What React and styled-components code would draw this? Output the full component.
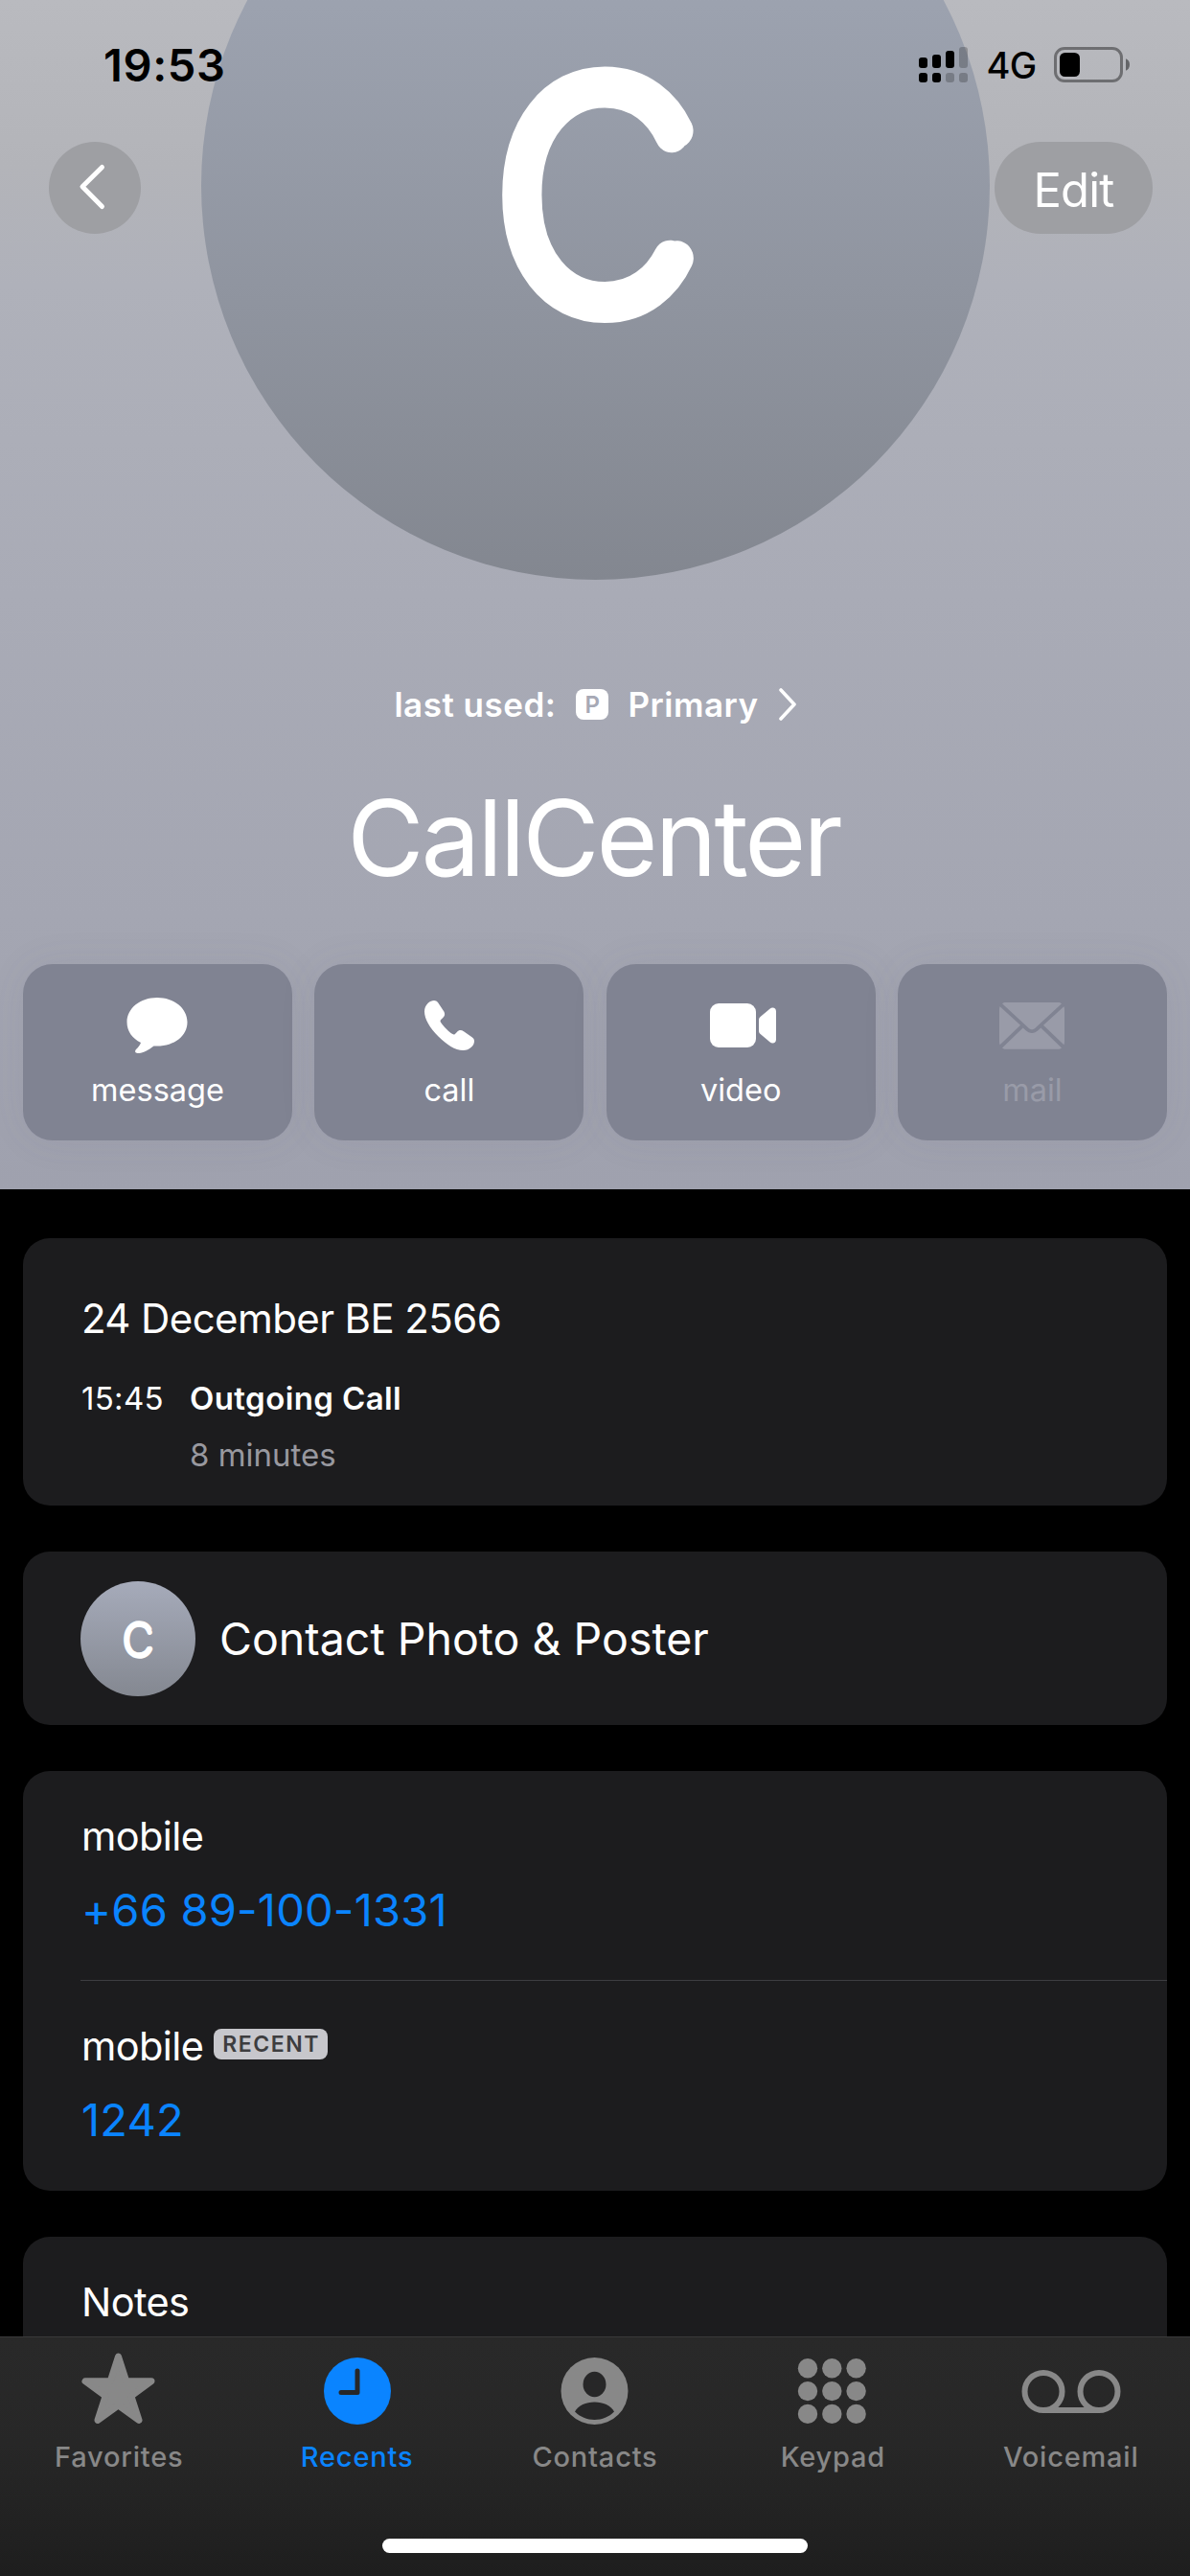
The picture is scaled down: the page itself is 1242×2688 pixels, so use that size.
// React
import { useState } from 'react'

// Styled components
import styled, { createGlobalStyle } from 'styled-components'

const actions = [
  { label: 'message', icon: <MessageIcon />, shift: -1 },
  { label: 'call', icon: <CallIcon />, shift: 0 },
  { label: 'video', icon: <VideoIcon />, shift: 3 },
  { label: 'mail', icon: <MailIcon />, shift: 0, disabled: true }
]

const tabs = [
  { label: 'Favorites', icon: <StarIcon /> },
  { label: 'Recents', icon: <ClockIcon /> },
  { label: 'Contacts', icon: <PersonIcon /> },
  { label: 'Keypad', icon: <KeypadIcon /> },
  { label: 'Voicemail', icon: <VoicemailIcon /> }
]

function App () {

  const [activeTab, setActiveTab] = useState('Recents')

  return (
    <Screen>
      <GlobalStyle />
      <Hero>
        <Avatar>
          <Initial size={823} viewBox="0 0 823 823" />
        </Avatar>
        <LastUsed>
          <span>last used:</span>
          <LineBadge>P</LineBadge>
          <span>Primary</span>
          <ChevronRight />
        </LastUsed>
        <ContactName>CallCenter</ContactName>
        <Actions>
          {
            actions.map((action) => {
              return (
                <ActionButton key={action.label} disabled={action.disabled}>
                  <ActionIcon $shift={action.shift}>{action.icon}</ActionIcon>
                  <ActionLabel>{action.label}</ActionLabel>
                </ActionButton>
              )
            })
          }
        </Actions>
        <Header>
          <StatusBar>
            <Clock>19:53</Clock>
            <StatusIcons>
              <SignalIcon />
              <Network>4G</Network>
              <BatteryIcon />
            </StatusIcons>
          </StatusBar>
          <NavBar>
            <BackButton aria-label="Back">
              <ChevronLeft />
            </BackButton>
            <EditButton>Edit</EditButton>
          </NavBar>
        </Header>
      </Hero>
      <Cards>
        <CallCard>
          <CallDate>24 December BE 2566</CallDate>
          <CallRow>
            <CallTime>15:45</CallTime>
            <CallType>Outgoing Call</CallType>
            <CallDuration>8 minutes</CallDuration>
          </CallRow>
        </CallCard>
        <PosterCard>
          <SmallAvatar>
            <Initial size={120} viewBox="13.7 11.7 800 800" />
          </SmallAvatar>
          <PosterTitle>Contact Photo &amp; Poster</PosterTitle>
        </PosterCard>
        <PhoneCard>
          <PhoneRow $divider>
            <PhoneLabel>mobile</PhoneLabel>
            <PhoneNumber>+66 89-100-1331</PhoneNumber>
          </PhoneRow>
          <PhoneRow>
            <PhoneLabel>
              mobile
              <RecentBadge>RECENT</RecentBadge>
            </PhoneLabel>
            <PhoneNumber>1242</PhoneNumber>
          </PhoneRow>
        </PhoneCard>
        <NotesCard>Notes</NotesCard>
      </Cards>
      <TabBar>
        <TabList>
          {
            tabs.map((tab) => {
              return (
                <Tab
                  key={tab.label}
                  $active={tab.label === activeTab}
                  onClick={() => setActiveTab(tab.label)}
                >
                  {tab.icon}
                  <TabLabel>{tab.label}</TabLabel>
                </Tab>
              )
            })
          }
        </TabList>
        <HomeIndicator />
      </TabBar>
    </Screen>
  )

}

export default App

// Icons

// Thin letter with a wide round stroke, dashed so that its ends stop early and come out rounded
function Initial ({ size, viewBox }) {
  return (
    <svg width={size} height={size} viewBox={viewBox}>
      <InitialText transform="translate(417.5 534) scale(0.96 1)" textAnchor="middle">C</InitialText>
    </svg>
  )
}

function SignalIcon () {
  return (
    <svg width="51" height="37" viewBox="0 0 51 37">
      <rect x="0" y="11" width="9" height="11" rx="3" />
      <rect x="14" y="8" width="9" height="14" rx="3" />
      <rect x="28" y="4" width="9" height="18" rx="3" />
      <rect x="42" y="0" width="9" height="22" rx="3" opacity="0.22" />
      <rect x="0" y="27" width="9" height="10" rx="3" />
      <rect x="14" y="27" width="9" height="10" rx="3" />
      <rect x="28" y="27" width="9" height="10" rx="3" opacity="0.22" />
      <rect x="42" y="27" width="9" height="10" rx="3" opacity="0.22" />
    </svg>
  )
}

function BatteryIcon () {
  return (
    <svg width="79" height="37" viewBox="0 0 79 37">
      <rect x="1.5" y="1.5" width="69" height="34" rx="9.5" fill="none" stroke="#000" strokeOpacity="0.4" strokeWidth="3" />
      <rect x="6" y="6" width="21" height="25" rx="5.5" />
      <path d="M75 12.3c2.5.9 4 3.2 4 6.2s-1.5 5.3-4 6.2z" fillOpacity="0.45" />
    </svg>
  )
}

function ChevronLeft () {
  return (
    <svg width="96" height="96" viewBox="0 0 96 96" fill="none" stroke="#fff" strokeWidth="5" strokeLinecap="round" strokeLinejoin="round">
      <path d="M55.5 26.5L35 46.8L55.5 67.5" />
    </svg>
  )
}

function ChevronRight () {
  return (
    <svg width="18" height="34" viewBox="0 0 18 34" fill="none" stroke="#fff" strokeWidth="3.6" strokeLinecap="round" strokeLinejoin="round">
      <path d="M2 2L16 17L2 32" />
    </svg>
  )
}

function MessageIcon () {
  return (
    <svg width="64" height="58" viewBox="0 0 64 58" fill="currentColor">
      <path d="M32 0C49.5 0 63.5 11 63.5 25.5S50 50.5 32 50.5c-1.2 0-2.4 0-3.5-.1C24 54 17 58 11.5 58c-2.3 0-3.2-2-1.5-3.9 2.2-2.3 4-4.5 5-7.1C6 42.5.5 35 .5 25.5.5 11 14.5 0 32 0z" />
    </svg>
  )
}

function CallIcon () {
  return (
    <svg width="52" height="52" viewBox="0 0 52 52" fill="currentColor">
      <path d="M14.5 37.5C6 29 0 19.5 0 11.5 0 8.2 1.2 5.2 3.7 2.8 5.7.9 7.9 0 10 0c1.7 0 3.1.7 4.2 2.3l5.8 8.6c.8 1.2 1.1 2.2 1.1 3.3 0 1.3-.6 2.5-1.8 3.7l-2.1 2.1c-.9.9-.8 1.6-.3 2.5 1.2 2 3.7 4.9 6 7.2s4.8 4.4 6.5 5.4c.9.6 1.7.6 2.5-.2l2-2c1.2-1.2 2.4-1.8 3.7-1.8 1.1 0 2.2.4 3.4 1.2l8.6 6C51.3 39.4 52 40.8 52 42.4c0 2.1-1.1 4.3-2.9 6.1C46.7 50.9 43.7 52 40.4 52 32 52 23 46 14.5 37.5z" />
    </svg>
  )
}

function VideoIcon () {
  return (
    <svg width="70" height="46" viewBox="0 0 70 46" fill="currentColor">
      <rect x="0" y="0" width="48" height="46" rx="9" />
      <path d="M51 17.5c0-1.4.5-2.5 1.6-3.5l9.8-8.3c1-.8 1.9-1.2 3-1.2 2.2 0 3.6 1.6 3.6 4v29c0 2.4-1.4 4-3.6 4-1.1 0-2-.4-3-1.2L52.6 32c-1.1-1-1.6-2.1-1.6-3.5z" />
    </svg>
  )
}

function MailIcon () {
  return (
    <svg width="68" height="49" viewBox="0 0 68 49" fill="currentColor">
      <path d="M3 1.3C4 .4 5.3 0 7 0h54c1.7 0 3 .4 4 1.3L38 26.2c-1.5 1.4-2.8 2-4 2s-2.5-.6-4-2z" />
      <path d="M.6 4.2L22 23.8.6 44.2C.2 43.3 0 42.3 0 41V7.5C0 6.2.2 5.1.6 4.2z" />
      <path d="M67.4 4.2L46 23.8l21.4 20.4c.4-.9.6-1.9.6-3.2V7.5c0-1.3-.2-2.4-.6-3.3z" />
      <path d="M3 47.5L24.7 26.5l2.6 2.4c2.3 2 4.4 3 6.7 3s4.4-1 6.7-3l2.6-2.4L65 47.5c-1 .9-2.3 1.3-4 1.3H7c-1.7 0-3-.4-4-1.3z" />
    </svg>
  )
}

function StarIcon () {
  return (
    <svg width="104" height="76" viewBox="0 0 104 76" fill="currentColor" stroke="currentColor" strokeWidth="7" strokeLinejoin="round">
      <path d="M51.5 5.2L59.8 30.8L86 30.8L64.9 46.3L73 71.4L51.5 55.8L30 71.4L38.1 46.3L17 30.8L43.2 30.8Z" />
    </svg>
  )
}

function ClockIcon () {
  return (
    <svg width="104" height="76" viewBox="0 0 104 76" fill="none">
      <circle cx="52" cy="41" r="35" fill="currentColor" />
      <path d="M52 20V42.5H35" stroke="#272728" strokeWidth="5" strokeLinecap="round" strokeLinejoin="round" />
    </svg>
  )
}

function PersonIcon () {
  return (
    <svg width="104" height="76" viewBox="0 0 104 76" fill="#272728">
      <circle cx="51.5" cy="41" r="35" fill="currentColor" />
      <ellipse cx="51.5" cy="34" rx="12" ry="13.2" />
      <path d="M31 62.5C34.5 56 42.5 52.5 51.5 52.5S68.5 56 72 62.5C66.5 68 59.5 71 51.5 71S36.5 68 31 62.5z" />
    </svg>
  )
}

function KeypadIcon () {
  const positions = [0, 1, 2]
  return (
    <svg width="104" height="76" viewBox="0 0 104 76" fill="currentColor">
      {
        positions.map((row) => positions.map((column) => (
          <circle key={`${row}-${column}`} cx={26 + column * 25.3} cy={17.3 + row * 23.8} r="10.2" />
        )))
      }
    </svg>
  )
}

function VoicemailIcon () {
  return (
    <svg width="104" height="76" viewBox="0 0 104 76" fill="none" stroke="currentColor" strokeWidth="6">
      <circle cx="23" cy="41.5" r="19.5" />
      <circle cx="81" cy="41.5" r="19.5" />
      <path d="M23 61H81" />
    </svg>
  )
}

// Styles
const GlobalStyle = createGlobalStyle`
  * {
    box-sizing: border-box;
  }
  body {
    margin: 0;
    background-color: #000;
    font-family: Inter, "Liberation Sans", sans-serif;
  }
  button {
    padding: 0;
    border: none;
    background: none;
    color: inherit;
    font: inherit;
  }
  svg {
    display: block;
    flex-shrink: 0;
  }
`
const InitialText = styled.text`
  fill: none;
  stroke: white;
  stroke-width: 36px;
  stroke-linejoin: round;
  stroke-linecap: round;
  stroke-dasharray: 98 57 490 54 2000 0;
  font-family: Inter, sans-serif;
  font-size: 310px;
  font-weight: 100;
`
const Screen = styled.div`
  display: flex;
  flex-direction: column;
  width: 1242px;
  height: 2688px;
  background-color: #000;
  color: white;
  overflow: hidden;
`
const Hero = styled.section`
  position: relative;
  display: flex;
  flex-direction: column;
  align-items: center;
  flex-shrink: 0;
  height: 1241px;
  overflow: hidden;
  background: linear-gradient(180deg, #b9babf 0%, #b3b4b9 14%, #afb1ba 24%, #a9abb6 50%, #a4a6b2 77%, #9fa1ae 100%);
`
const Avatar = styled.div`
  flex-shrink: 0;
  width: 823px;
  height: 823px;
  margin-top: -218px;
  border-radius: 50%;
  background: linear-gradient(180deg, #a5abb9 0%, #9ca2af 27%, #838790 100%);
`
const LastUsed = styled.div`
  display: flex;
  align-items: center;
  height: 34px;
  margin-top: 113px;
  font-size: 35px;
  font-weight: 600;
  line-height: 34px;
  letter-spacing: 0.5px;
`
const LineBadge = styled.span`
  width: 34px;
  height: 32px;
  margin: 0 20px 0 21px;
  border-radius: 8px;
  background-color: white;
  color: #a7a9b5;
  font-size: 24px;
  line-height: 33px;
  text-align: center;

  & + span {
    margin-right: 21px;
  }
`
const ContactName = styled.h1`
  margin: 57px 0 0;
  padding-right: 3px;
  font-size: 110px;
  font-weight: 400;
  line-height: 130px;
  letter-spacing: -3.1px;
`
const Actions = styled.div`
  display: grid;
  grid-template-columns: repeat(4, 1fr);
  gap: 23.3px;
  width: 1194px;
  margin-top: 67px;
`
const ActionButton = styled.button`
  display: flex;
  flex-direction: column;
  align-items: center;
  height: 184px;
  padding-top: 34px;
  border-radius: 31px;
  background-color: #808392;
  color: ${({ disabled }) => disabled ? '#999ba8' : 'white'};
  box-shadow: 0 0 40px rgba(90, 92, 110, 0.08);
`
const ActionIcon = styled.span`
  display: flex;
  align-items: center;
  height: 60px;
  transform: translateX(${({ $shift }) => $shift}px);
`
const ActionLabel = styled.span`
  margin-top: 18px;
  font-size: 32.5px;
  line-height: 40px;
`
const Header = styled.header`
  position: absolute;
  top: 0;
  left: 0;
  width: 100%;
`
const StatusBar = styled.div`
  display: flex;
  align-items: flex-start;
  justify-content: space-between;
  height: 148px;
  padding: 43px 63.5px 0 108px;
  color: black;
`
const Clock = styled.div`
  font-size: 47px;
  font-weight: 600;
  line-height: 50px;
  letter-spacing: 0.6px;
`
const StatusIcons = styled.div`
  display: flex;
  align-items: center;
  height: 49px;
`
const Network = styled.span`
  margin: 0 18px 0 20px;
  font-size: 38px;
  font-weight: 500;
  line-height: 50px;
  letter-spacing: -0.7px;
`
const NavBar = styled.nav`
  display: flex;
  justify-content: space-between;
  padding: 0 39px 0 51px;
`
const BackButton = styled.button`
  width: 96px;
  height: 96px;
  border-radius: 48px;
  background-color: #9e9fa3;
`
const EditButton = styled.button`
  width: 165px;
  height: 96px;
  border-radius: 48px;
  background-color: #9e9fa3;
  font-size: 49px;
  line-height: 101px;
  letter-spacing: -0.8px;
`
const Cards = styled.main`
  display: flex;
  flex-direction: column;
  flex: 1;
  gap: 48px;
  min-height: 0;
  padding: 51px 24px 0;
  overflow: hidden;
`
const Card = styled.section`
  flex-shrink: 0;
  border-radius: 28px;
  background-color: #1c1c1e;
`
const CallCard = styled(Card)`
  height: 279px;
  padding: 58px 61px 0;
`
const CallDate = styled.div`
  font-size: 42px;
  line-height: 52px;
  letter-spacing: -0.6px;
`
const CallRow = styled.div`
  display: grid;
  grid-template-columns: 113px 1fr;
  row-gap: 19px;
  margin-top: 37px;
  font-size: 33px;
  line-height: 40px;
`
const CallTime = styled.span`
  letter-spacing: 0.3px;
`
const CallType = styled.span`
  font-weight: 600;
  letter-spacing: 0.4px;
`
const CallDuration = styled.span`
  grid-column: 2;
  color: #98989f;
`
const PosterCard = styled(Card)`
  display: flex;
  align-items: center;
  height: 181px;
  padding-left: 60px;
`
const SmallAvatar = styled.div`
  width: 120px;
  height: 120px;
  margin-right: 25px;
  border-radius: 50%;
  background: linear-gradient(180deg, #a6abba 0%, #848891 100%);
`
const PosterTitle = styled.div`
  font-size: 46.5px;
  line-height: 56px;
`
const PhoneCard = styled(Card)`
  height: 438px;
  padding-left: 60px;
`
const PhoneRow = styled.div`
  height: 219px;
  padding: 41px 0 0 1px;
  border-bottom: ${({ $divider }) => $divider ? '1px solid #3d3d41' : 'none'};
`
const PhoneLabel = styled.div`
  display: flex;
  align-items: center;
  font-size: 41.5px;
  line-height: 54px;
  letter-spacing: -0.6px;
`
const PhoneNumber = styled.div`
  margin-top: 20px;
  color: #0a84ff;
  font-size: 47px;
  line-height: 60px;
  letter-spacing: 0.2px;
`
const RecentBadge = styled.span`
  height: 32px;
  margin: 0 0 5px 11px;
  padding: 0 8px 0 9px;
  border-radius: 8px;
  background-color: #c7c7cc;
  color: #3d3d3f;
  font-size: 23px;
  font-weight: 600;
  line-height: 33px;
  letter-spacing: 1.5px;
`
const NotesCard = styled(Card)`
  height: 219px;
  padding: 41px 61px 0;
  font-size: 41.5px;
  line-height: 54px;
  letter-spacing: -0.6px;
`
const TabBar = styled.footer`
  display: flex;
  flex-direction: column;
  align-items: center;
  justify-content: space-between;
  flex-shrink: 0;
  height: 250px;
  padding-bottom: 24px;
  border-top: 1px solid #39393a;
  background: linear-gradient(180deg, #292929 0%, #272727 45%, #1e1e1e 100%);
`
const TabList = styled.div`
  display: grid;
  grid-template-columns: repeat(5, 248.4px);
  width: 1242px;
`
const Tab = styled.button`
  display: flex;
  flex-direction: column;
  align-items: center;
  padding-top: 15px;
  color: ${({ $active }) => $active ? '#0a84ff' : '#888888'};
`
const TabLabel = styled.span`
  margin-top: 14px;
  font-size: 29px;
  font-weight: 500;
  line-height: 40px;
  letter-spacing: 0.8px;
`
const HomeIndicator = styled.div`
  width: 444px;
  height: 15px;
  border-radius: 8px;
  background-color: white;
`
